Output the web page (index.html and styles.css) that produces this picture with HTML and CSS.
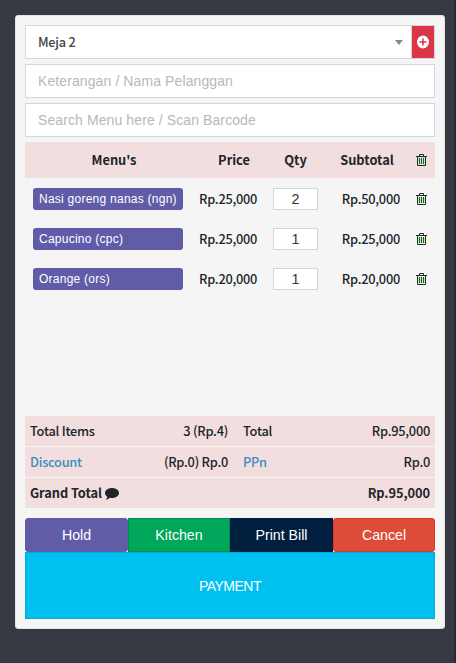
FILE: index.html
```html
<!DOCTYPE html>
<html lang="id">
<head>
<meta charset="utf-8">
<title>Meja 2</title>
<link rel="stylesheet" href="styles.css">
</head>
<body>
<svg class="defs" width="0" height="0" aria-hidden="true">
  <symbol id="trash" viewBox="0 0 12 14">
    <path d="M2 5h7v6h-7z" fill="#b9f5b0"/>
    <path d="M0 3.500h11M3.500 3V1.500h4V3M1.500 3.500v9h8V3.500" fill="none" stroke="#20292b"/>
    <path d="M3.500 5v6M5.500 5v6M7.500 5v6" fill="none" stroke="#28552f"/>
  </symbol>
</svg>
<main class="panel">
  <div class="select-group">
    <div class="select"><span>Meja 2</span><i class="caret"></i></div>
    <button class="add" aria-label="Tambah">
      <svg width="12" height="14" viewBox="0 0 12 14"><ellipse cx="6" cy="7" rx="6" ry="6.500" fill="#fff"/><path d="M6 3.500v7M2.500 7h7" stroke="#dc3545" stroke-width="1.600"/></svg>
    </button>
  </div>
  <input class="field" placeholder="Keterangan / Nama Pelanggan">
  <input class="field" placeholder="Search Menu here / Scan Barcode">
  <section class="items">
    <div class="row head"><span>Menu's</span><span>Price</span><span>Qty</span><span>Subtotal</span><svg class="trash"><use href="#trash"/></svg></div>
    <div class="row"><span class="badge">Nasi goreng nanas (ngn)</span><span class="money">Rp.25,000</span><input class="qty" value="2"><span class="money">Rp.50,000</span><svg class="trash"><use href="#trash"/></svg></div>
    <div class="row"><span class="badge">Capucino (cpc)</span><span class="money">Rp.25,000</span><input class="qty" value="1"><span class="money">Rp.25,000</span><svg class="trash"><use href="#trash"/></svg></div>
    <div class="row"><span class="badge">Orange (ors)</span><span class="money">Rp.20,000</span><input class="qty" value="1"><span class="money">Rp.20,000</span><svg class="trash"><use href="#trash"/></svg></div>
  </section>
  <section class="totals">
    <div class="total"><span>Total Items</span><span class="num">3 (Rp.4)</span><span>Total</span><span class="num">Rp.95,000</span></div>
    <div class="total"><a>Discount</a><span class="num">(Rp.0) Rp.0</span><a>PPn</a><span class="num">Rp.0</span></div>
    <div class="total grand"><span>Grand Total <svg width="14" height="12" viewBox="0 0 14 12"><path d="M7 0c3.900 0 7 2.200 7 5s-3.100 5-7 5c-.8 0-1.500-.1-2.200-.3C3.800 10.800 2.400 11.500.8 11.700c.9-.9 1.400-1.700 1.400-2.900C.8 7.800 0 6.500 0 5c0-2.800 3.100-5 7-5z" fill="#212529"/></svg></span><span class="num">Rp.95,000</span></div>
  </section>
  <div class="actions">
    <button class="hold">Hold</button><button class="kitchen">Kitchen</button><button class="bill">Print Bill</button><button class="cancel">Cancel</button>
  </div>
  <button class="payment">PAYMENT</button>
</main>
</body>
</html>
```
FILE: styles.css
```css
* { box-sizing: border-box; }
body {
  margin: 0;
  height: 663px;
  padding: 15px 9px 0 15px;
  background: #373a42;
  border-right: 2px solid #222d32;
  color: #212529;
  font: 500 12.8px/20px "Noto Sans CJK SC", sans-serif;
  letter-spacing: -.25px;
  overflow: hidden;
}
.defs { display: block; height: 0; }
button, input { font-family: "Liberation Sans", sans-serif; margin: 0; }
.panel {
  display: flex;
  flex-direction: column;
  width: 430px;
  height: 614px;
  padding: 9px;
  background: #f5f5f5;
  border: 1px solid #e3e3e3;
  border-radius: 3px;
}
.select-group {
  display: flex;
  height: 34px;
  border: 1px solid #d2d6de;
  margin-bottom: 5px;
  flex: none;
}
.select {
  flex: 1;
  display: flex;
  align-items: center;
  justify-content: space-between;
  padding: 0 8px 0 12px;
  background: #fff;
  border-right: 1px solid #d2d6de;
  color: #444;
}
.caret {
  border: 4px solid transparent;
  border-top: 5px solid #888;
  border-bottom: 0;
}
.add {
  display: grid;
  place-items: center;
  width: 22px;
  padding: 0 0 1px;
  border: 0;
  background: #dc3545;
}
.field {
  flex: none;
  height: 34px;
  margin-bottom: 5px;
  padding: 0 12px;
  border: 1px solid #d2d6de;
  background: #fff;
  font-size: 14px;
  letter-spacing: .1px;
}
.field::placeholder { color: #b8b8b8; }
.items { height: 274px; flex: none; }
.row {
  display: grid;
  grid-template-columns: 150px 58px 45px 66px 12px;
  column-gap: 16px;
  align-items: center;
  height: 40px;
  padding: 0 8px;
}
.head {
  height: 36px;
  margin-bottom: 1px;
  background: #f2dede;
  font-weight: 700;
  letter-spacing: 0;
  text-align: center;
}
.head > :nth-child(-n+2) { padding-left: 12px; }
.badge {
  height: 22px;
  padding: 0 6px;
  border-radius: 3px;
  background: #605ca8;
  color: #fff;
  font: 12px/22px "Liberation Sans", sans-serif;
  letter-spacing: .25px;
  white-space: nowrap;
}
.money { text-align: right; white-space: nowrap; }
.qty {
  width: 45px;
  height: 22px;
  padding: 0;
  border: 1px solid #d2d6de;
  background: #fff;
  color: #333;
  font-size: 14.400px;
  text-align: center;
}
.trash { width: 12px; height: 14px; }
.totals {
  display: grid;
  row-gap: 1px;
  flex: none;
  margin-bottom: 10px;
}
.total {
  display: grid;
  grid-template-columns: 100px 98px 60px 1fr;
  height: 30px;
  padding: 0 5px;
  align-items: center;
  background: #f2dede;
  white-space: nowrap;
}
.total > :nth-child(3) { padding-left: 15px; }
.num { text-align: right; }
.grand { grid-template-columns: 1fr 1fr; height: 30px; font-weight: 700; letter-spacing: -.06px; }
.grand svg { vertical-align: -2px; }
a { color: #3c8dbc; }
.actions {
  display: grid;
  grid-template-columns: 103px 102px 103px 102px;
  height: 34px;
  flex: none;
}
.actions button {
  border: 1px solid;
  color: #fff;
  font-size: 14.2px;
  padding: 0;
}
.actions .hold { background: #605ca8; border-color: #605ca8; border-radius: 3px; }
.actions .kitchen { background: #00a65a; border-color: #008d4c; }
.actions .bill { background: #001f3f; border-color: #001f3f; }
.actions .cancel { background: #dd4b39; border-color: #d73925; border-radius: 3px; }
.payment {
  flex: none;
  height: 67px;
  padding: 0;
  border: 1px solid #00acd6;
  background: #00c0ef;
  color: #fff;
  font-size: 14px;
  letter-spacing: -.5px;
}
```
